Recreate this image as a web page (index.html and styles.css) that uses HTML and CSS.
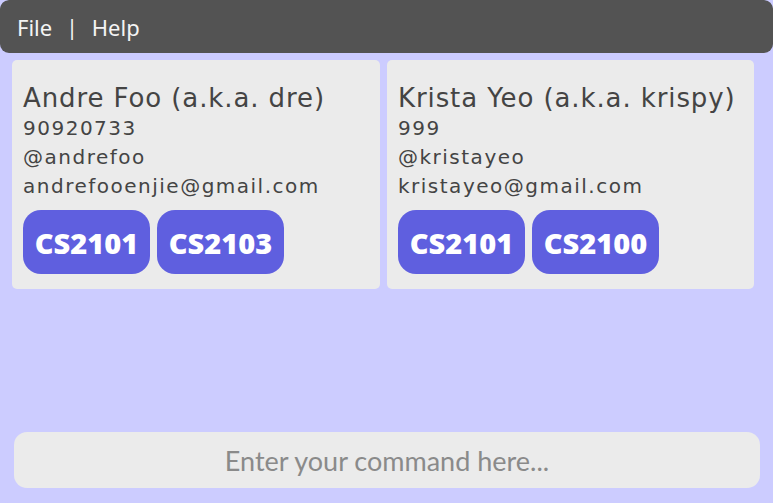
FILE: index.html
```html
<!DOCTYPE html>
<html>
<head>
<meta charset="utf-8">
<link rel="stylesheet" href="styles.css">
</head>
<body>
<div class="window">
  <div class="menubar"><span>File</span><span class="sep">|</span><span>Help</span></div>
  <div class="list">
    <div class="card">
      <div class="name">Andre Foo (a.k.a. dre)</div>
      <div class="line">90920733</div>
      <div class="line">@andrefoo</div>
      <div class="line">andrefooenjie@gmail.com</div>
      <div class="tags"><span class="tag">CS2101</span><span class="tag">CS2103</span></div>
    </div>
    <div class="card">
      <div class="name">Krista Yeo (a.k.a. krispy)</div>
      <div class="line">999</div>
      <div class="line">@kristayeo</div>
      <div class="line">kristayeo@gmail.com</div>
      <div class="tags"><span class="tag">CS2101</span><span class="tag">CS2100</span></div>
    </div>
  </div>
  <div class="command"><input class="cmd-input" type="text" placeholder="Enter your command here..."></div>
</div>
</body>
</html>
```
FILE: styles.css
```css
html, body {
  margin: 0;
  padding: 0;
  background: #ccccff;
}
.window {
  height: 503px;
  display: flex;
  flex-direction: column;
  background: #ccccff;
  border-radius: 8px;
  overflow: hidden;
}
.menubar {
  height: 53px;
  flex: none;
  background: #535353;
  border-radius: 9px;
  display: flex;
  align-items: center;
  padding-left: 17px;
  gap: 14px;
  color: #f4f4f4;
  font-family: "Noto Sans", sans-serif;
  font-size: 22px;
}
.menubar .sep { font-size: 21px; }
.list {
  flex: 1;
  display: grid;
  grid-template-columns: 368px 367px;
  column-gap: 7px;
  align-items: start;
  padding: 7px 0 0 12px;
}
.card {
  background: #ebebeb;
  border-radius: 5px;
  padding: 22px 10px 15px 11px;
  color: #444444;
  font-family: "DejaVu Sans", sans-serif;
}
.name {
  font-size: 26px;
  line-height: 32px;
  white-space: nowrap;
  letter-spacing: 0.9px;
}
.line {
  font-size: 20px;
  line-height: 29px;
  letter-spacing: 1.5px;
  white-space: nowrap;
}
.tags {
  display: flex;
  gap: 7px;
  margin-top: 9px;
}
.tag {
  height: 64px;
  width: 127px;
  box-sizing: border-box;
  border-radius: 18px;
  background: #5f5fdf;
  color: #ffffff;
  font-family: "Open Sans", sans-serif;
  font-weight: 800;
  font-size: 29px;
  display: flex;
  align-items: center;
  justify-content: center;
  letter-spacing: 0px;
}
.command {
  flex: none;
  padding: 0 13px 15px 14px;
}
.cmd-input {
  display: block;
  width: 100%;
  box-sizing: border-box;
  height: 56px;
  border: none;
  outline: none;
  border-radius: 13px;
  background: #ebebeb;
  text-align: center;
  font-family: "Lato", sans-serif;
  font-size: 27px;
  color: #555;
}
.cmd-input::placeholder {
  color: #8a8a8a;
}
```
